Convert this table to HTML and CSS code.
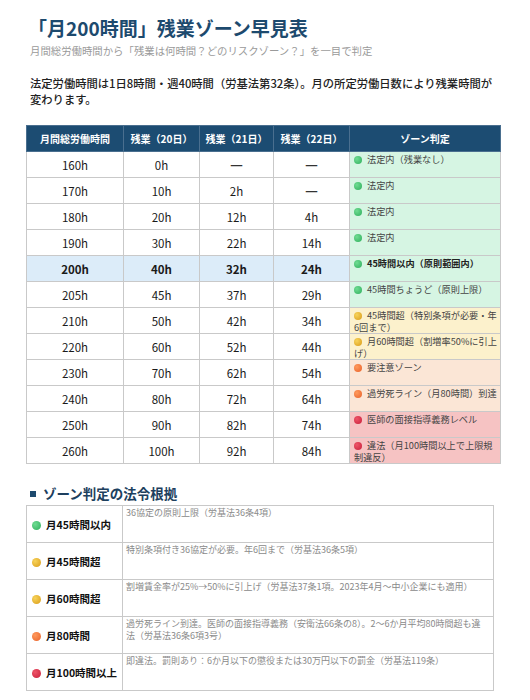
FILE: index.html
```html
<!DOCTYPE html>
<html lang="ja">

<head>
    <meta charset="UTF-8">
    <meta name="viewport" content="width=device-width, initial-scale=1.0">
    <title>月200時間 残業ゾーン早見表</title>
    <link rel="stylesheet" href="styles.css">
</head>

<body>

    <div class="page">
        <h1 class="title">「月200時間」残業ゾーン早見表</h1>
        <p class="subtitle">月間総労働時間から「残業は何時間？どのリスクゾーン？」を一目で判定</p>
        <p class="lead">法定労働時間は1日8時間・週40時間（労基法第32条）。月の所定労働日数により残業時間が変わります。</p>

        <table class="zone-table">
            <colgroup>
                <col class="c-total">
                <col class="c-day">
                <col class="c-day2">
                <col class="c-day3">
                <col class="c-zone">
            </colgroup>
            <thead>
                <tr>
                    <th>月間総労働時間</th>
                    <th>残業（20日）</th>
                    <th>残業（21日）</th>
                    <th>残業（22日）</th>
                    <th>ゾーン判定</th>
                </tr>
            </thead>
            <tbody>
                <tr>
                    <td>160h</td><td>0h</td><td class="dash">—</td><td class="dash">—</td>
                    <td class="zone green"><span class="dot green"></span>法定内（残業なし）</td>
                </tr>
                <tr>
                    <td>170h</td><td>10h</td><td>2h</td><td class="dash">—</td>
                    <td class="zone green"><span class="dot green"></span>法定内</td>
                </tr>
                <tr>
                    <td>180h</td><td>20h</td><td>12h</td><td>4h</td>
                    <td class="zone green"><span class="dot green"></span>法定内</td>
                </tr>
                <tr>
                    <td>190h</td><td>30h</td><td>22h</td><td>14h</td>
                    <td class="zone green"><span class="dot green"></span>法定内</td>
                </tr>
                <tr class="current">
                    <td>200h</td><td>40h</td><td>32h</td><td>24h</td>
                    <td class="zone green"><span class="dot green"></span>45時間以内（原則範囲内）</td>
                </tr>
                <tr>
                    <td>205h</td><td>45h</td><td>37h</td><td>29h</td>
                    <td class="zone green"><span class="dot green"></span>45時間ちょうど（原則上限）</td>
                </tr>
                <tr>
                    <td>210h</td><td>50h</td><td>42h</td><td>34h</td>
                    <td class="zone yellow"><span class="dot yellow"></span>45時間超（特別条項が必要・年6回まで）</td>
                </tr>
                <tr>
                    <td>220h</td><td>60h</td><td>52h</td><td>44h</td>
                    <td class="zone yellow"><span class="dot yellow"></span>月60時間超（割増率50%に引上げ）</td>
                </tr>
                <tr>
                    <td>230h</td><td>70h</td><td>62h</td><td>54h</td>
                    <td class="zone orange"><span class="dot orange"></span>要注意ゾーン</td>
                </tr>
                <tr>
                    <td>240h</td><td>80h</td><td>72h</td><td>64h</td>
                    <td class="zone orange"><span class="dot orange"></span>過労死ライン（月80時間）到達</td>
                </tr>
                <tr>
                    <td>250h</td><td>90h</td><td>82h</td><td>74h</td>
                    <td class="zone red"><span class="dot red"></span>医師の面接指導義務レベル</td>
                </tr>
                <tr>
                    <td>260h</td><td>100h</td><td>92h</td><td>84h</td>
                    <td class="zone red"><span class="dot red"></span>違法（月100時間以上で上限規制違反）</td>
                </tr>
            </tbody>
        </table>

        <h2 class="section-title"><span class="square"></span>ゾーン判定の法令根拠</h2>

        <table class="law-table">
            <colgroup>
                <col class="c-label">
                <col class="c-text">
            </colgroup>
            <tr>
                <th><span class="dot green"></span>月45時間以内</th>
                <td>36協定の原則上限（労基法36条4項）</td>
            </tr>
            <tr>
                <th><span class="dot yellow"></span>月45時間超</th>
                <td>特別条項付き36協定が必要。年6回まで（労基法36条5項）</td>
            </tr>
            <tr>
                <th><span class="dot yellow"></span>月60時間超</th>
                <td>割増賃金率が25%→50%に引上げ（労基法37条1項。2023年4月～中小企業にも適用）</td>
            </tr>
            <tr>
                <th><span class="dot orange"></span>月80時間</th>
                <td>過労死ライン到達。医師の面接指導義務（安衛法66条の8）。2～6か月平均80時間超も違法（労基法36条6項3号）</td>
            </tr>
            <tr>
                <th><span class="dot red"></span>月100時間以上</th>
                <td>即違法。罰則あり：6か月以下の懲役または30万円以下の罰金（労基法119条）</td>
            </tr>
        </table>
    </div>

</body>

</html>
```

FILE: styles.css
```css
* {
    box-sizing: border-box;
}

body {
    font-family: "Noto Sans CJK JP", "Liberation Sans", sans-serif;
    background-color: #fff;
    color: #222;
    margin: 0;
}

.page {
    width: 474px;
    margin-left: 26px;
    padding-top: 15px;
}

.title {
    font-size: 19px;
    line-height: 26px;
    color: #1d4a6e;
    margin: 0 0 0 2px;
    font-weight: bold;
}

.subtitle {
    font-size: 10.4px;
    line-height: 14px;
    color: #9a9a9a;
    margin: 3px 0 0 4px;
}

.lead {
    font-size: 11.3px;
    line-height: 16px;
    color: #222;
    margin: 17px 0 0 4px;
    font-weight: 500;
}

/* main table */
.zone-table {
    width: 474px;
    border-collapse: collapse;
    table-layout: fixed;
    margin-top: 18px;
}

.c-total { width: 97px; }
.c-day { width: 76px; }
.c-day2 { width: 74px; }
.c-day3 { width: 76px; }
.c-zone { width: 151px; }

.zone-table th {
    background-color: #1c4c72;
    color: #fff;
    font-size: 10px;
    font-weight: bold;
    height: 26px;
    padding: 0;
    border: 1px solid #4a6f8f;
}

.zone-table td {
    height: 26px;
    padding: 0;
    text-align: center;
    font-size: 11.5px;
    color: #1a1a1a;
    border: 1px solid #c9c9c9;
}

.zone-table td.dash {
    font-family: "Liberation Sans", sans-serif;
    font-weight: bold;
    color: #333;
}

.zone-table tr.current td {
    background-color: #dcecf9;
    font-weight: bold;
}

.zone-table td.zone {
    text-align: left;
    vertical-align: top;
    font-size: 9.2px;
    font-weight: normal;
    line-height: 12px;
    color: #444;
    padding: 1px 3px 0 4px;
}

.zone-table tr.current td.zone {
    background-color: #d6f5e3;
    color: #222;
    font-weight: bold;
}

.zone.green { background-color: #d6f5e3; }
.zone.yellow { background-color: #fcf1cc; }
.zone.orange { background-color: #fbe6d6; }
.zone.red { background-color: #f6c3c3; }

.dot {
    display: inline-block;
    width: 8px;
    height: 8px;
    border-radius: 50%;
    margin-right: 5px;
    vertical-align: -1px;
}

.dot.green { background: radial-gradient(circle at 35% 35%, #6fdc92, #2fae5c); }
.dot.yellow { background: radial-gradient(circle at 35% 35%, #f7d35a, #d99b18); }
.dot.orange { background: radial-gradient(circle at 35% 35%, #ff9a5c, #e8612a); }
.dot.red { background: radial-gradient(circle at 35% 35%, #ee5468, #c81f3a); }

/* law table */
.section-title {
    font-size: 13.5px;
    line-height: 18px;
    color: #1d3f5e;
    margin: 20px 0 3px 4px;
    font-weight: bold;
}

.square {
    display: inline-block;
    width: 6px;
    height: 6px;
    background-color: #1d4a6e;
    margin-right: 7px;
    vertical-align: 2px;
}

.law-table {
    width: 467px;
    border-collapse: collapse;
    table-layout: fixed;
}

.c-label { width: 96px; }
.c-text { width: 371px; }

.law-table th,
.law-table td {
    border: 1px solid #c9c9c9;
    height: 37px;
}

.law-table th {
    text-align: left;
    vertical-align: middle;
    font-size: 10.5px;
    font-weight: bold;
    color: #111;
    padding: 0 0 0 5px;
}

.law-table th .dot {
    width: 9px;
    height: 9px;
    margin-right: 5px;
}

.law-table td {
    vertical-align: top;
    font-size: 9px;
    line-height: 12px;
    color: #8a8a8a;
    padding: 1px 4px 0 3px;
}
```
